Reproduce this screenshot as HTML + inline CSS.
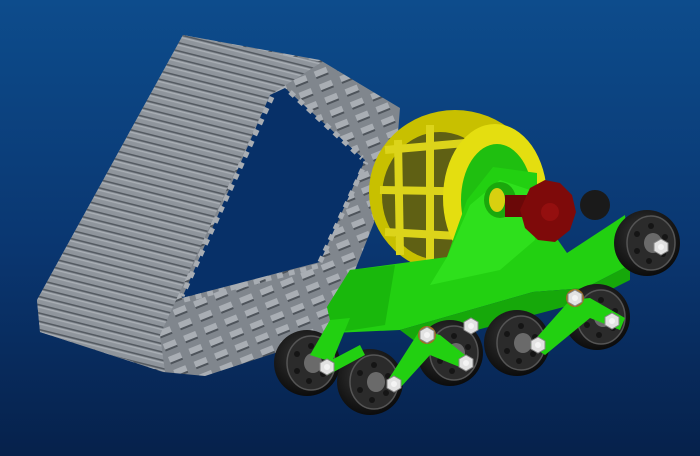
<!DOCTYPE html>
<html><head><meta charset="utf-8"><style>
html,body{margin:0;padding:0;width:700px;height:456px;overflow:hidden}
</style></head><body>
<svg width="700" height="456" viewBox="0 0 700 456" xmlns="http://www.w3.org/2000/svg">
<defs>
<linearGradient id="bg" x1="0" y1="0" x2="0" y2="1">
<stop offset="0" stop-color="#0d4c8c"/><stop offset="0.55" stop-color="#0a3670"/><stop offset="1" stop-color="#06214b"/>
</linearGradient>
<pattern id="rib" width="10" height="8" patternUnits="userSpaceOnUse" patternTransform="rotate(14)">
<rect width="10" height="8" fill="#8f959c"/><rect y="5.5" width="10" height="1.6" fill="#555b62"/><rect y="0" width="10" height="1.2" fill="#abb0b6"/>
</pattern>
<pattern id="teeth" width="22" height="14" patternUnits="userSpaceOnUse" patternTransform="rotate(-22)">
<rect width="22" height="14" fill="#80868d"/><rect x="0" y="2" width="13" height="6" fill="#a9aeb4"/><rect x="0" y="8" width="13" height="2" fill="#4e545b"/>
</pattern>
<radialGradient id="tire" cx="0.45" cy="0.4" r="0.6">
<stop offset="0" stop-color="#3a3a3a"/><stop offset="1" stop-color="#0c0c0c"/>
</radialGradient>
<g id="wheel">
<circle r="33" fill="url(#tire)"/>
<ellipse cx="4" cy="0" rx="24" ry="27" fill="#2b2b2b" stroke="#555" stroke-width="1.5"/>
<g fill="#151515"><circle cx="4" cy="-17" r="3"/><circle cx="18" cy="-6" r="3"/><circle cx="16" cy="11" r="3"/><circle cx="2" cy="18" r="3"/><circle cx="-10" cy="8" r="3"/><circle cx="-10" cy="-9" r="3"/></g>
<ellipse cx="6" cy="0" rx="9" ry="10" fill="#6a6a6a"/>
</g>
<g id="nut"><polygon points="-7,-4 0,-8 7,-4 7,4 0,8 -7,4" fill="#e2e2e2" stroke="#888" stroke-width="1"/><circle r="3" fill="#f4f4f4"/></g>
</defs>
<rect width="700" height="456" fill="url(#bg)"/>
<!-- track -->
<path d="M183,35 L320,60 L400,108 L395,170 L355,270 L345,330 L205,376 L163,372 L40,332 L37,300 Z" fill="url(#teeth)"/>
<path d="M183,35 L322,62 L270,95 L160,335 L165,372 L40,332 L37,300 Z" fill="url(#rib)"/>
<path d="M270,95 L285,88 L365,160 L320,262 L182,298 Z" fill="#073068"/>
<g stroke="#a8adb3" stroke-width="5" fill="none" stroke-dasharray="6 6">
<path d="M272,97 L182,296"/>
<path d="M184,300 L318,266"/>
<path d="M320,262 L366,162"/>
<path d="M290,92 L362,158"/>
</g>
<!-- back wheel -->
<circle cx="595" cy="205" r="15" fill="#1a1a1a"/>
<!-- yellow wheel -->
<ellipse cx="455" cy="192" rx="86" ry="82" fill="#c8c000"/>
<ellipse cx="440" cy="196" rx="58" ry="64" fill="#5f6014"/>
<g stroke="#dcd41a" stroke-width="8">
<line x1="385" y1="150" x2="500" y2="140"/><line x1="380" y1="190" x2="495" y2="192"/><line x1="385" y1="232" x2="495" y2="238"/>
<line x1="398" y1="140" x2="400" y2="255"/><line x1="430" y1="125" x2="430" y2="262"/>
</g>
<ellipse cx="495" cy="198" rx="52" ry="74" fill="#e4de10"/>
<ellipse cx="497" cy="200" rx="36" ry="56" fill="#1fbf10"/>
<!-- green chassis -->
<path d="M350,270 L447,257 L467,200 L493,167 L537,173 L537,210 L567,253 L625,215 L630,265 L585,288 L533,292 L400,330 L333,333 L327,307 Z" fill="#22d011"/>
<path d="M447,257 L470,205 L500,180 L530,190 L535,240 L500,270 L430,285 Z" fill="#2ee01c"/>
<path d="M327,307 L350,270 L395,265 L385,325 L333,333 Z" fill="#19b80c"/>
<path d="M400,330 L533,292 L585,288 L630,265 L630,280 L590,300 L420,345 Z" fill="#16a80a"/>
<ellipse cx="500" cy="200" rx="16" ry="18" fill="#1aa80c"/>
<ellipse cx="497" cy="200" rx="8" ry="12" fill="#d8d010"/>
<!-- red knob -->
<rect x="505" y="195" width="25" height="22" fill="#6a0808"/>
<path d="M530,188 L545,180 L560,183 L572,195 L576,212 L570,230 L555,242 L538,240 L525,228 L520,210 Z" fill="#7e0a0a"/>
<circle cx="550" cy="212" r="9" fill="#940f0f"/>
<!-- wheels -->
<use href="#wheel" x="597" y="317"/>
<use href="#wheel" x="450" y="353"/>
<use href="#wheel" x="517" y="343"/>
<use href="#wheel" x="647" y="243"/>
<use href="#wheel" x="307" y="363"/>
<use href="#wheel" x="370" y="382"/>
<!-- green arms -->
<g fill="#22d011">
<path d="M310,355 L330,320 L350,318 L332,362 Z"/>
<path d="M322,365 L360,345 L365,355 L328,375 Z"/>
<path d="M388,380 L420,330 L440,335 L465,355 L462,368 L430,355 L400,388 Z"/>
<path d="M530,345 L570,300 L590,298 L625,318 L620,330 L590,318 L545,355 Z"/>
</g>
<circle cx="427" cy="335" r="9" fill="#a07020"/>
<circle cx="575" cy="298" r="9" fill="#a07020"/>
<use href="#nut" x="427" y="335"/>
<use href="#nut" x="575" y="298"/>
<use href="#nut" x="466" y="363"/>
<use href="#nut" x="394" y="384"/>
<use href="#nut" x="327" y="367"/>
<use href="#nut" x="471" y="326"/>
<use href="#nut" x="538" y="345"/>
<use href="#nut" x="612" y="321"/>
<use href="#nut" x="661" y="247"/>
</svg>
</body></html>
